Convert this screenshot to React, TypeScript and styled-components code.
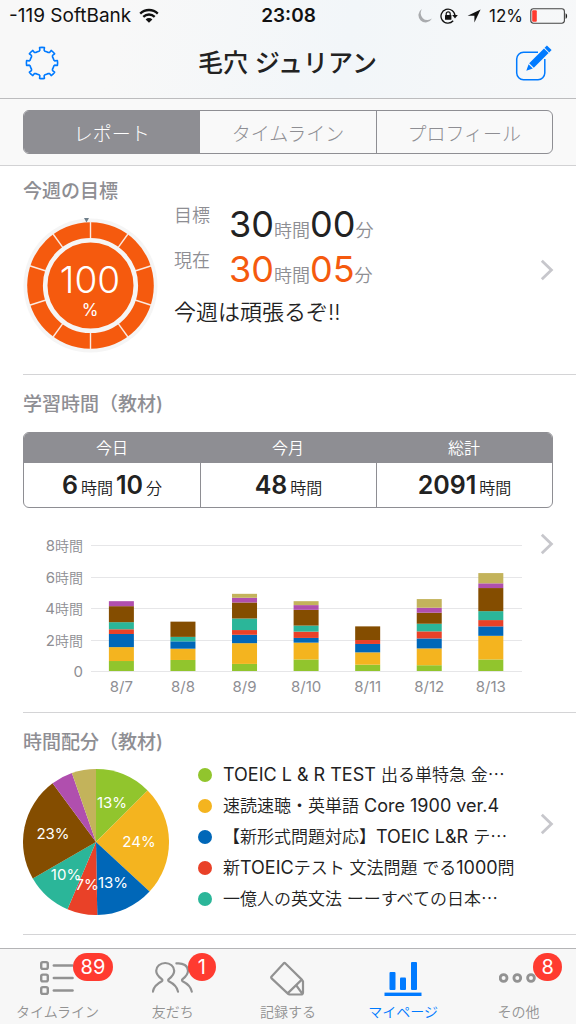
import React from 'react';
import styled, { createGlobalStyle, css } from 'styled-components';

const GRAY = '#8e8e93';
const BLUE = '#007aff';
const ORANGE = '#f55a0e';
const COLORS = ['#91c52d', '#f4b41f', '#0067b8', '#e94128', '#2bb699', '#844d00', '#b04fae', '#c3b35b'];

const GlobalStyle = createGlobalStyle`
  * { box-sizing: border-box; }
  body {
    margin: 0;
    background: #fff;
    color: #222;
    font-family: Inter, 'Noto Sans CJK JP', sans-serif;
    font-size: 18px;
  }
  button { font: inherit; color: inherit; border: 0; padding: 0; background: none; cursor: pointer; }
  h1, h2, p, ul { margin: 0; padding: 0; }
  svg { display: block; }
`;

const Screen = styled.div`
  min-height: 100vh;
  display: flex;
  flex-direction: column;
`;

const Header = styled.header`
  background: linear-gradient(100deg, #f8f8f8 20%, #f2f6f9 60%, #f7f8f9);
  border-bottom: 1px solid #bcbcbe;
`;

const StatusBar = styled.div`
  height: 32px;
  padding: 0 8px 0 9px;
  display: grid;
  grid-template-columns: 1fr auto 1fr;
  align-items: center;
  color: #111;
  line-height: 24px;
`;

const StatusGroup = styled.div<{ $end?: boolean }>`
  display: flex;
  align-items: center;
  gap: ${p => (p.$end ? 7 : 8)}px;
  font-size: ${p => (p.$end ? 17 : 19)}px;
  justify-content: ${p => (p.$end ? 'flex-end' : 'flex-start')};
`;

const Time = styled.time`
  font-weight: 600;
  font-size: 19px;
`;

const NavBar = styled.div`
  height: 66px;
  padding: 0 24px 4px;
  display: flex;
  align-items: center;
  justify-content: space-between;
`;

const Title = styled.h1`
  font-size: 25px;
  line-height: 32px;
  font-weight: 500;
`;

const SegmentBar = styled.div`
  padding: 11px 23px;
  background: #f9f9f9;
  border-bottom: 1px solid #d2d2d4;
`;

const Segments = styled.div`
  display: flex;
  height: 44px;
  border: 1px solid ${GRAY};
  border-radius: 6px;
  overflow: hidden;
`;

const Segment = styled.button<{ $active?: boolean }>`
  flex: 1;
  font-size: 19px;
  font-weight: 300;
  color: ${p => (p.$active ? '#fff' : GRAY)};
  background: ${p => (p.$active ? GRAY : 'transparent')};
  & + & { border-left: 1px solid ${GRAY}; }
`;

const Section = styled.section<{ $tight?: boolean }>`
  position: relative;
  margin-left: 23px;
  padding: ${p => (p.$tight ? 12 : 16)}px 23px 0 0;
  border-bottom: 1px solid #d4d4d6;
`;

const SectionTitle = styled.h2`
  font-size: 19px;
  line-height: 28px;
  font-weight: 500;
  color: ${GRAY};
`;

const More = styled.button`
  position: absolute;
  right: 22px;
  top: 50%;
  transform: translateY(-50%);
`;

const GoalBody = styled.div`
  display: flex;
  gap: 16px;
  padding-bottom: 21px;
`;

const ChartSlot = styled.div`
  padding-top: 12px;
`;

const GoalText = styled.div`
  flex: 1;
`;

const GoalRow = styled.div`
  display: flex;
  height: 45px;
  color: ${GRAY};
  font-weight: 350;
`;

const GoalLabel = styled.span`
  width: 55px;
  line-height: 20px;
`;

const GoalValue = styled.span<{ $color: string }>`
  line-height: 37px;
  b {
    font-size: 36px;
    font-weight: 400;
    color: ${p => p.$color};
  }
`;

const Message = styled.p`
  font-size: 22px;
  line-height: 32px;
  font-weight: 350;
`;

const Stats = styled.table`
  width: 100%;
  margin: 13px 0 24px;
  table-layout: fixed;
  border-collapse: separate;
  border-spacing: 0;
  border: 1px solid ${GRAY};
  border-radius: 6px;
  overflow: hidden;
  text-align: center;
  th {
    height: 30px;
    padding: 0;
    background: ${GRAY};
    color: #fff;
    font-size: 16px;
    line-height: 24px;
    font-weight: 350;
  }
  td {
    height: 44px;
    padding: 2px 0 0;
    font-size: 16px;
    line-height: 32px;
    font-weight: 350;
  }
  td + td { border-left: 1px solid ${GRAY}; }
  b { font-size: 25px; font-weight: 600; margin: 0 3px; }
  b:first-child { margin-left: 0; }
`;

const ChartBox = styled.div`
  padding: 0 31px 12px 0;
  svg { width: 100%; height: auto; }
`;

const ShareBody = styled.div`
  display: flex;
  gap: 29px;
  padding-bottom: 19px;
`;

const Legend = styled.ul`
  flex: 1;
  min-width: 0;
  padding-top: 2px;
  list-style: none;
`;

const LegendItem = styled.li<{ $color: string }>`
  display: flex;
  align-items: center;
  gap: 11px;
  height: 31px;
  font-size: 17px;
  line-height: 31px;
  font-weight: 350;
  white-space: nowrap;
  &::before {
    content: '';
    width: 14px;
    height: 14px;
    border-radius: 50%;
    background: ${p => p.$color};
  }
`;

const Latin = styled.span`
  font-size: 18px;
  font-weight: 400;
`;

const Ellipsis = styled.span`
  font-family: 'Noto Sans CJK JP', sans-serif;
`;

const TabBar = styled.nav`
  position: sticky;
  bottom: 0;
  margin-top: auto;
  height: 76px;
  display: flex;
  background: #f7f7f7;
  border-top: 1px solid #b4b4b6;
`;

const Tab = styled.a<{ $active?: boolean }>`
  flex: 1;
  display: flex;
  flex-direction: column;
  align-items: center;
  padding-top: 11px;
  color: #929292;
  font-size: 14px;
  line-height: 24px;
  font-weight: 350;
  text-decoration: none;
  ${p => p.$active && css`color: ${BLUE};`}
`;

const TabIcon = styled.span`
  position: relative;
  height: 42px;
`;

const Badge = styled.span`
  position: absolute;
  left: calc(50% + 15px);
  top: -7px;
  min-width: 28px;
  height: 28px;
  padding: 0 8px;
  border-radius: 14px;
  background: #ff3b30;
  color: #fff;
  font-size: 20px;
  line-height: 28px;
  font-weight: 400;
  text-align: center;
`;

const point = (cx: number, cy: number, r: number, deg: number) => {
  const a = (deg * Math.PI) / 180;
  return `${(cx + r * Math.sin(a)).toFixed(2)} ${(cy - r * Math.cos(a)).toFixed(2)}`;
};

const gearPath = () => {
  let d = '';
  for (let i = 0; i < 8; i++) {
    const a = i * 45;
    d += `${i ? 'L' : 'M'}${point(17, 17, 12.2, a - 14)}`;
    d += `L${point(17, 17, 13, a - 9.5)}L${point(17, 17, 15.6, a - 9)}`;
    d += `A15.6 15.6 0 0 1 ${point(17, 17, 15.6, a + 9)}`;
    d += `L${point(17, 17, 13, a + 9.5)}L${point(17, 17, 12.2, a + 14)}`;
    d += `A12.2 12.2 0 0 1 ${point(17, 17, 12.2, a + 31)}`;
  }
  return d + 'Z';
};

const GearIcon = () => (
  <svg width="36" height="36" viewBox="-1 -1 36 36" fill="none" stroke={BLUE} strokeWidth="1.6" strokeLinejoin="round">
    <path d={gearPath()} />
  </svg>
);

const ComposeIcon = () => (
  <svg width="37" height="37" viewBox="515 45 37 37" fill="none">
    <path d="M538 52.2H523.5A7 7 0 0 0 516.7 59V73A7 7 0 0 0 523.5 79.8H538A7 7 0 0 0 544.8 73V59" stroke={BLUE} strokeWidth="1.5" />
    <path d="M526.3 70.8 528.6 64.2 532.8 68.4Z" fill={BLUE} />
    <path d="M529.2 63.2 544 48.4 548.6 53 533.8 67.8Z" fill={BLUE} />
    <path d="M544.6 47.8 546.9 45.4 551.6 50 549.2 52.4Z" fill={BLUE} />
  </svg>
);

const WifiIcon = () => (
  <svg width="20" height="16" viewBox="0 0 20 16" fill="none" stroke="#111" strokeWidth="2.3">
    <path d="M1.2 5.6A12.6 12.6 0 0 1 18.8 5.6" />
    <path d="M4.3 8.8A8.2 8.2 0 0 1 15.7 8.8" />
    <path d="M10 14.8 6.6 11.4A4.9 4.9 0 0 1 13.4 11.4Z" fill="#111" stroke="none" />
  </svg>
);

const MoonIcon = () => (
  <svg width="16" height="16" viewBox="0 0 16 16">
    <path d="M5 1A7.2 7.2 0 1 0 15 10.6 7 7 0 0 1 5 1Z" fill="#a9abae" />
  </svg>
);

const LockIcon = () => (
  <svg width="19" height="16" viewBox="0 0 19 16" fill="none" stroke="#111">
    <path d="M13.2 12.8A7 7 0 1 1 15 8" strokeWidth="1.3" />
    <path d="M12.2 7H17.8L15 10.4Z" fill="#111" stroke="none" />
    <rect x="5" y="7" width="6.4" height="4.8" rx=".6" fill="#111" stroke="none" />
    <path d="M6.2 7.4V5.8A2 2 0 0 1 10.2 5.8V7.4" strokeWidth="1.2" />
  </svg>
);

const ArrowIcon = () => (
  <svg width="16" height="16" viewBox="0 0 16 16">
    <path d="M14.6 1.4 8.4 14.4V7.7H1.6Z" fill="#111" />
  </svg>
);

const BatteryIcon = () => (
  <svg width="38" height="16" viewBox="0 0 38 16" fill="none">
    <rect x=".8" y=".8" width="33.6" height="14.4" rx="2.6" stroke="#444" strokeWidth="1.1" />
    <rect x="2.2" y="2.2" width="4.6" height="11.6" rx="1" fill="#ff3b30" />
    <path d="M35.6 5.2C37.6 6 37.6 10 35.6 10.8Z" fill="#222" />
  </svg>
);

const Chevron = ({ label }: { label: string }) => (
  <More type="button" aria-label={label}>
    <svg width="14" height="22" viewBox="0 0 14 22" fill="none" stroke="#c7c7cc" strokeWidth="2.8">
      <path d="M1.8 1.8 11.4 11 1.8 20.2" />
    </svg>
  </More>
);

const Gauge = () => (
  <svg width="135" height="135" viewBox="0 0 135 135" role="img" aria-label="100 %">
    <circle cx="67.5" cy="67.5" r="67" fill="#f5f5f5" />
    <circle cx="67.5" cy="67.5" r="63.3" fill={ORANGE} />
    {Array.from({ length: 10 }, (_, i) => (
      <path key={i} d={`M${point(67.5, 67.5, 46, i * 36)}L${point(67.5, 67.5, 64, i * 36)}`} stroke="#fbe9df" strokeWidth="1.4" />
    ))}
    <circle cx="67.5" cy="67.5" r="45.3" fill={ORANGE} stroke="#f5f5f5" strokeWidth="4.6" />
    <path d="M61 0H66L63.5 4.6Z" fill="#6f7f8a" />
    <g fill="#fff" textAnchor="middle">
      <text x="67" y="75" fontSize="37" fontWeight="350">100</text>
      <text x="67" y="98" fontSize="17" fontWeight="400">%</text>
    </g>
  </svg>
);

// Minutes per material, bottom of each stack first.
const DAYS: { day: string; minutes: number[] }[] = [
  { day: '8/7', minutes: [38, 53, 50, 18, 27, 61, 19, 0] },
  { day: '8/8', minutes: [42, 43, 28, 0, 17, 58, 0, 0] },
  { day: '8/9', minutes: [27, 79, 32, 18, 44, 61, 18, 15] },
  { day: '8/10', minutes: [44, 64, 18, 24, 23, 60, 18, 15] },
  { day: '8/11', minutes: [24, 47, 32, 15, 0, 52, 0, 0] },
  { day: '8/12', minutes: [22, 64, 38, 27, 29, 42, 19, 33] },
  { day: '8/13', minutes: [44, 90, 36, 24, 34, 88, 18, 39] },
];

const BarChart = () => {
  const base = 139;
  const perMinute = 31.5 / 120;
  return (
    <svg viewBox="0 0 499 168" role="img" aria-label="学習時間">
      {[0, 2, 4, 6, 8].map(h => {
        const y = Math.round(base - h * 60 * perMinute);
        return (
          <g key={h}>
            <rect x="68" y={y} width="431" height="1" fill="#e6e6e8" />
            <text x="60" y={y + 6} fontSize="15" fill={GRAY} textAnchor="end">
              {h}
              {h > 0 && <tspan fontSize="14" fontWeight="350">時間</tspan>}
            </text>
          </g>
        );
      })}
      {DAYS.map(({ day, minutes }, i) => {
        const center = 67.6 + (431 / 7) * (i + 0.5);
        let total = 0;
        return (
          <g key={day}>
            {minutes.map((m, k) => {
              total += m;
              return <rect key={k} x={center - 12.5} y={base - total * perMinute} width="25" height={m * perMinute} fill={COLORS[k]} />;
            })}
            <text x={center} y="160" fontSize="15" fill={GRAY} textAnchor="middle">{day}</text>
          </g>
        );
      })}
    </svg>
  );
};

const SLICE_ENDS = [45, 132.8, 179, 203, 240, 323.5, 340.7, 360];
const SLICE_LABELS: [string, number, number][] = [
  ['13%', 89, 39], ['24%', 116, 78], ['13%', 90, 119], ['7%', 64, 121], ['10%', 43, 111], ['23%', 30, 70],
];

const PieChart = () => (
  <svg width="146" height="146" viewBox="0 0 146 146" role="img" aria-label="時間配分">
    {SLICE_ENDS.map((end, i) => {
      const start = i ? SLICE_ENDS[i - 1] : 0;
      return <path key={end} d={`M73 73L${point(73, 73, 73, start)}A73 73 0 0 1 ${point(73, 73, 73, end)}Z`} fill={COLORS[i]} />;
    })}
    {SLICE_LABELS.map(([text, x, y]) => (
      <text key={`${x}-${y}`} x={x} y={y} fontSize="15" fill="#fff" textAnchor="middle">{text}</text>
    ))}
  </svg>
);

const ListIcon = () => (
  <svg width="36" height="36" viewBox="40 960 36 36" fill="none" stroke="#929292" strokeWidth="2.4" strokeLinecap="round">
    {[965.5, 978, 990.5].map(y => (
      <g key={y}>
        <rect x="41.2" y={y - 3.4} width="6.6" height="6.8" rx="1.6" />
        <path d={`M53.8 ${y}H72.6`} />
      </g>
    ))}
  </svg>
);

const FriendsIcon = () => (
  <svg width="42" height="36" viewBox="152 960 42 36" fill="none" stroke="#929292" strokeWidth="2.2" strokeLinecap="round" strokeLinejoin="round">
    <path d="M152.9 991.6C153.8 986.4 157.6 983.4 161.8 981.2 162.6 980.7 162.6 979.8 161.8 979.2 158 976.4 156.2 973.6 156.2 970.8A9 7.8 0 0 1 174.2 970.8C174.2 973.6 172.4 976.4 168.8 979.2 168 979.8 168 980.7 168.8 981.2 173.2 983.4 177 986.4 178 991.6" />
    <path d="M176.4 963.4C183.4 962.6 188 966 188 970.8 188 973.6 186.2 976.4 182.6 979.2 181.8 979.8 181.8 980.7 182.6 981.2 187 983.4 190.8 986.4 191.8 991.6" />
  </svg>
);

const PenIcon = () => (
  <svg width="36" height="36" viewBox="270 960 36 36" fill="none" stroke="#929292" strokeWidth="2.2" strokeLinejoin="round">
    <path d="M285.2 963.2 301.8 979.6 287.6 993.4 271.6 978.4Q270.8 977.4 271.6 976.4L283.6 963.4Q284.4 962.6 285.2 963.2Z" />
    <path d="M301.8 979.6 303 981.4V992.5Q303 994.5 301 994.5H289.4L287.6 993.4M296 985 302.4 993.8" />
  </svg>
);

const ChartIcon = () => (
  <svg width="38" height="36" viewBox="384 960 38 36" fill={BLUE}>
    <rect x="389.5" y="972" width="6" height="18" rx="1" />
    <rect x="400" y="977.5" width="6" height="12.5" rx="1" />
    <rect x="411" y="962" width="6" height="28" rx="1" />
    <rect x="384.5" y="992.6" width="37" height="3.4" />
  </svg>
);

const DotsIcon = () => (
  <svg width="38" height="36" viewBox="499 960 38 36" fill="none" stroke="#929292" strokeWidth="2.8">
    <circle cx="503.6" cy="978" r="3.4" />
    <circle cx="517.3" cy="978" r="3.4" />
    <circle cx="531" cy="978" r="3.4" />
  </svg>
);

const TABS = [
  { label: 'タイムライン', icon: <ListIcon />, badge: '89' },
  { label: '友だち', icon: <FriendsIcon />, badge: '1' },
  { label: '記録する', icon: <PenIcon /> },
  { label: 'マイページ', icon: <ChartIcon />, active: true },
  { label: 'その他', icon: <DotsIcon />, badge: '8' },
];

export default function App() {
  return (
    <Screen lang="ja">
      <GlobalStyle />
      <Header>
        <StatusBar>
          <StatusGroup>
            <span>-119 SoftBank</span>
            <WifiIcon />
          </StatusGroup>
          <Time>23:08</Time>
          <StatusGroup $end>
            <MoonIcon />
            <LockIcon />
            <ArrowIcon />
            <span>12%</span>
            <BatteryIcon />
          </StatusGroup>
        </StatusBar>
        <NavBar>
          <button type="button" aria-label="設定"><GearIcon /></button>
          <Title>毛穴 ジュリアン</Title>
          <button type="button" aria-label="編集"><ComposeIcon /></button>
        </NavBar>
      </Header>

      <SegmentBar>
        <Segments>
          <Segment type="button" $active>レポート</Segment>
          <Segment type="button">タイムライン</Segment>
          <Segment type="button">プロフィール</Segment>
        </Segments>
      </SegmentBar>

      <main>
        <Section $tight>
          <SectionTitle>今週の目標</SectionTitle>
          <GoalBody>
            <ChartSlot><Gauge /></ChartSlot>
            <GoalText>
              <GoalRow>
                <GoalLabel>目標</GoalLabel>
                <GoalValue $color="#222"><b>30</b>時間<b>00</b>分</GoalValue>
              </GoalRow>
              <GoalRow>
                <GoalLabel>現在</GoalLabel>
                <GoalValue $color={ORANGE}><b>30</b>時間<b>05</b>分</GoalValue>
              </GoalRow>
              <Message>今週は頑張るぞ!!</Message>
            </GoalText>
          </GoalBody>
          <Chevron label="目標の詳細" />
        </Section>

        <Section>
          <SectionTitle>学習時間（教材)</SectionTitle>
          <Stats>
            <thead>
              <tr><th scope="col">今日</th><th scope="col">今月</th><th scope="col">総計</th></tr>
            </thead>
            <tbody>
              <tr>
                <td><b>6</b>時間<b>10</b>分</td>
                <td><b>48</b>時間</td>
                <td><b>2091</b>時間</td>
              </tr>
            </tbody>
          </Stats>
          <ChartBox><BarChart /></ChartBox>
          <Chevron label="学習時間の詳細" />
        </Section>

        <Section>
          <SectionTitle>時間配分（教材)</SectionTitle>
          <ShareBody>
            <ChartSlot><PieChart /></ChartSlot>
            <Legend>
              <LegendItem $color={COLORS[0]}>
                <span><Latin>TOEIC L &amp; R TEST </Latin>出る単特急 金<Ellipsis>…</Ellipsis></span>
              </LegendItem>
              <LegendItem $color={COLORS[1]}>
                <span>速読速聴・英単語<Latin> Core 1900 ver.4</Latin></span>
              </LegendItem>
              <LegendItem $color={COLORS[2]}>
                <span>【新形式問題対応】<Latin>TOEIC L&amp;R </Latin>テ<Ellipsis>…</Ellipsis></span>
              </LegendItem>
              <LegendItem $color={COLORS[3]}>
                <span>新<Latin>TOEIC</Latin>テスト 文法問題 でる<Latin>1000</Latin>問</span>
              </LegendItem>
              <LegendItem $color={COLORS[4]}>
                <span>一億人の英文法 ーーすべての日本<Ellipsis>…</Ellipsis></span>
              </LegendItem>
            </Legend>
          </ShareBody>
          <Chevron label="時間配分の詳細" />
        </Section>
      </main>

      <TabBar>
        {TABS.map(({ label, icon, badge, active }) => (
          <Tab key={label} href="#" $active={active} aria-current={active ? 'page' : undefined}>
            <TabIcon>
              {icon}
              {badge && <Badge>{badge}</Badge>}
            </TabIcon>
            {label}
          </Tab>
        ))}
      </TabBar>
    </Screen>
  );
}
